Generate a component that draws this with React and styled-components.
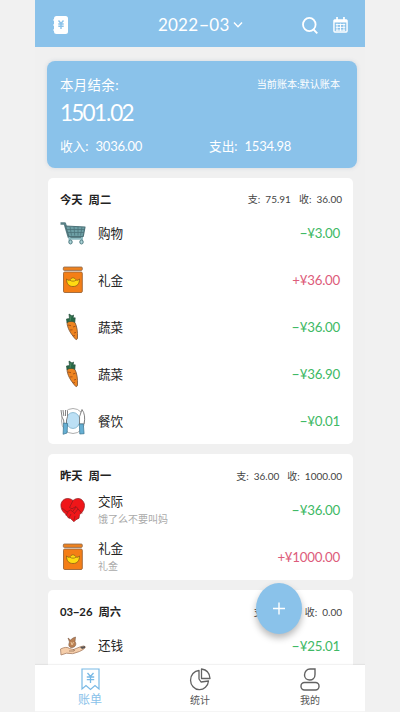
import React from "react";
import styled, { createGlobalStyle } from "styled-components";

const Global = createGlobalStyle`
  * { box-sizing: border-box; }
  body { margin: 0; background: #f1f1f1; font-family: Lato, "Noto Sans CJK SC", sans-serif; color: #333; }
  svg { display: block; overflow: visible; }
`;

const Phone = styled.div`
  position: relative;
  display: flex;
  flex-direction: column;
  width: 330px;
  height: 712px;
  margin: 0 auto;
  overflow: hidden;
  background: #f0f0f0;
`;
const Header = styled.header`
  flex: none;
  display: grid;
  grid-template-columns: 105px 1fr 84px;
  align-items: center;
  height: 47px;
  padding: 3px 15px 0 18px;
  background: #8ac2ea;
  color: #fff;
`;
const Month = styled.div`
  display: flex;
  align-items: center;
  gap: 4px;
  font-size: 17px;
  line-height: 20px;
  letter-spacing: 0.2px;
  white-space: nowrap;
`;
const Tools = styled.div`
  display: flex;
  align-items: center;
  justify-content: flex-end;
  gap: 15px;
  padding-right: 2.5px;
`;
const Dash = styled.span`
  display: inline-block;
  margin: 0 ${(p) => p.$gap || 1.8}px;
  transform: scaleX(1.75);
`;
const Scroll = styled.main`
  flex: 1;
  min-height: 0;
  overflow: hidden;
  padding: 14px 8px 0 13px;
`;
const Summary = styled.section`
  width: 310px;
  height: 107px;
  margin-left: -1px;
  padding: 12px 17px 0 13px;
  border-radius: 8px;
  background: #8ac2ea;
  box-shadow: 0 0 4px rgba(80, 110, 150, 0.18);
  color: #fff;
`;
const SummaryTop = styled.div`
  display: flex;
  justify-content: space-between;
  align-items: center;
  height: 21px;
`;
const SummaryLabel = styled.span`
  font-size: 13.4px;
  letter-spacing: 0.4px;
`;
const Book = styled.span`
  font-size: 10.1px;
`;
const Balance = styled.div`
  height: 37px;
  font-size: 22.5px;
  line-height: 37px;
  letter-spacing: -1.75px;
`;
const Point = styled.span`
  margin: 0 0.7px;
`;
const Totals = styled.div`
  display: grid;
  grid-template-columns: 149px 1fr;
  margin-top: 4px;
  font-size: 12.7px;
  line-height: 22px;
`;
const Total = styled.div`
  display: flex;
  align-items: baseline;
  gap: 7px;
`;
const Num = styled.span`
  font-size: 13px;
  letter-spacing: -0.25px;
`;
const Card = styled.section`
  width: 305px;
  margin-top: 10px;
  border-radius: 5px;
  background: #fff;
`;
const CardHead = styled.div`
  display: flex;
  justify-content: space-between;
  align-items: center;
  height: ${(p) => p.$h || 32}px;
  padding: 10px 11px 0 12px;
`;
const Day = styled.div`
  display: flex;
  align-items: baseline;
  gap: 6px;
  font-size: 11.3px;
  font-weight: 700;
  color: #222;
`;
const DayTotals = styled.div`
  display: flex;
  gap: 8px;
  font-size: 10px;
  color: #444;
`;
const DayTotal = styled.span`
  display: flex;
  align-items: baseline;
  gap: 5px;
`;
const Row = styled.div`
  display: grid;
  grid-template-columns: 38px 1fr auto;
  align-items: center;
  height: 47px;
  padding: ${(p) => p.$drop || 0}px 13px 0 12px;
`;
const Name = styled.div`
  font-size: 12.6px;
  line-height: 19px;
  color: #222;
`;
const Note = styled.div`
  font-size: 10px;
  line-height: 16px;
  color: #aaa;
`;
const Amount = styled.div`
  font-size: 13.3px;
  letter-spacing: -0.25px;
  color: ${(p) => (p.$income ? "#dd5c7b" : "#40b965")};
`;
const TabBar = styled.nav`
  flex: none;
  display: grid;
  grid-template-columns: repeat(3, 1fr);
  height: 47px;
  background: #fff;
  border-bottom: 1px solid #f5f5f5;
  box-shadow: 0 -1px 1px rgba(0, 0, 0, 0.05);
`;
const Tab = styled.div`
  display: flex;
  flex-direction: column;
  align-items: center;
  padding-top: 2px;
  font-size: ${(p) => (p.$active ? 12 : 10)}px;
  line-height: ${(p) => (p.$active ? 16 : 17)}px;
  color: ${(p) => (p.$active ? "#8ac2ea" : "#555")};
`;
const TabIcon = styled.div`
  display: flex;
  align-items: center;
  height: 25px;
`;
const Fab = styled.button`
  position: absolute;
  left: 221px;
  top: 583px;
  width: 46px;
  height: 51px;
  padding: 0;
  border: 0;
  border-radius: 50%;
  display: flex;
  align-items: center;
  justify-content: center;
  background: #8ac2ea;
  box-shadow: 0 4px 7px rgba(0, 0, 0, 0.28);
`;

const BookIcon = () => (
  <svg width="15" height="18" viewBox="0 0 15 18">
    <rect x="1" width="14" height="18" rx="2.5" fill="#fff" />
    <path d="M0 4h2M0 9h2M0 14h2" stroke="#fff" strokeWidth="1.2" />
    <path d="M5.500 4.500l2.500 3 2.500-3M5.300 8h5.400M5.300 10.300h5.400M8 7.500V13" fill="none" stroke="#8ac2ea" strokeWidth="1.4" />
  </svg>
);
const ChevronIcon = () => (
  <svg width="10" height="7" viewBox="0 0 10 7" fill="none" stroke="#fff" strokeWidth="1.4">
    <path d="M1 .5l4 4.300L9 .5" />
  </svg>
);
const SearchIcon = () => (
  <svg width="16" height="17" viewBox="0 0 16 17" fill="none" stroke="#fff" strokeWidth="1.8">
    <ellipse cx="7.3" cy="7.5" rx="6.3" ry="6.7" />
    <path d="M11.500 12.500l3.800 3.800" />
  </svg>
);
const CalendarIcon = () => (
  <svg width="15" height="16" viewBox="0 0 16 17" fill="none" stroke="#fff">
    <rect x="1" y="3" width="14" height="13" rx="1" strokeWidth="1.5" />
    <path d="M1 4.400h14" strokeWidth="2.8" />
    <path d="M4.300 0v4M11.700 0v4" strokeWidth="1.8" />
    <path d="M3 8h10M3 11h10M3 14h10M4.300 7v8M8 7v8M11.700 7v8" strokeWidth="1" />
  </svg>
);
const CartIcon = () => (
  <svg width="26" height="24" viewBox="0 0 26 24" fill="none" strokeLinejoin="round">
    <path d="M.5 2.500h4.300l4 13.500h14" stroke="#5b8187" strokeWidth="2.6" />
    <path d="M5.500 5L25 6l-1.800 9.500H8.800z" fill="#6d9fa5" stroke="#4d7278" strokeWidth="1.2" />
    <path d="M7 8.500h17M8 11.500h16M10 5.500l1.500 9M14 5.500l.7 9M18 5.500v9M22 6l-1.500 8.500" stroke="#4b747a" strokeWidth=".8" />
    <path d="M9.500 16v4M22 16v4M8.500 17.800h14" stroke="#8cbac0" strokeWidth="1.8" />
    <ellipse cx="10.500" cy="21" rx="1.700" ry="2" fill="#acd3d7" stroke="#507b81" />
    <ellipse cx="21.500" cy="21" rx="1.700" ry="2" fill="#acd3d7" stroke="#507b81" />
  </svg>
);
const GiftIcon = () => (
  <svg width="26" height="28" viewBox="0 0 26 28">
    <rect x="3.3" y="1" width="19" height="3.4" rx="1" fill="#ef821e" stroke="#87664d" strokeWidth=".8" />
    <rect x="3.5" y="6" width="18.8" height="20.5" rx="1.3" fill="#f47e16" stroke="#9b6539" strokeWidth=".9" />
    <path d="M6.500 13c2 1.700 3 1.600 4 .3 1.400-2 3.500-2 5 0 1 1.300 2 1.400 4-.3 0 5-2.400 7.500-6.500 7.500S6.500 18 6.500 13z" fill="#ffda12" stroke="#8a5b18" strokeWidth=".8" />
    <path d="M10 14.200c1.500 1.300 4.500 1.300 6 0" fill="none" stroke="#8a5b18" strokeWidth=".7" />
  </svg>
);
const CarrotIcon = () => (
  <svg width="26" height="28" viewBox="0 0 26 28">
    <path d="M7 9c2.500-2 6-1.700 8 .6 2 3.800 2.800 9 2.500 15.400-.4 2-1.700 2-2.600.5C11 21 7 15 7 9z" fill="#ee8420" stroke="#775134" strokeWidth=".8" />
    <path d="M8 12l3 .7M13 14l2.500-.8M10 17l2.500-.2M14 20l2-.6M13 23l2-.5" stroke="#984916" strokeWidth=".8" />
    <path d="M7 9.500L6.500 6l3-.4L9 1l3 2 1.500-1-.3 3 2-.2-.4 4.500c-2.500-1.300-5-1.300-7.800.2z" fill="#276947" stroke="#28513d" strokeWidth=".7" />
    <path d="M10 8l1-5" stroke="#5a9369" strokeWidth=".7" />
  </svg>
);
const MealIcon = () => (
  <svg width="26" height="28" viewBox="0 0 26 28">
    <ellipse cx="13" cy="14" rx="11.500" ry="12.500" fill="#fff" stroke="#999" strokeWidth=".8" />
    <ellipse cx="13" cy="13.500" rx="6.800" ry="8" fill="#bce0f5" stroke="#80b2cb" strokeWidth=".8" />
    <path d="M1 3l1 7q1 2 1.600 3L4 17h2.500V13Q8 11 7.500 3.500M3 3l.8 6M5.500 3v6" fill="#fff" stroke="#656565" strokeWidth=".8" />
    <path d="M22 2.500q-3.600 7-2.500 14.500H24Q26 8 22 2.500z" fill="#fff" stroke="#656565" strokeWidth=".8" />
    <path d="M3.600 16l4 .5-.5 9.500-4 1.300zM19.300 17h4l.8 9.700-4.300.3z" fill="#65afd3" stroke="#39728e" strokeWidth=".7" />
  </svg>
);
const HeartIcon = () => (
  <svg width="26" height="28" viewBox="0 0 26 28">
    <path d="M13 4.500C9 1 2.500 2 1 8c-.5 5 2 8 4.500 10l3 4 2 .5 3.500 3.200 2-2 3-1.500.5-3.500c3-2 5.700-6.500 4.800-11C22.500 2 17 1 13 4.500z" fill="#f01619" stroke="#8b1d20" strokeWidth=".7" />
    <path d="M13 4.500l-3.500 7 2.500 1.300 4-2.300 6 7M2 12l5 4 3.500-2 4 3M16 11l-3 4M18 13l-4 5M8 16l-2 3.500M11 18l-2 4M15 20l-1 4" fill="none" stroke="#8b1a1c" strokeWidth=".7" />
  </svg>
);
const HandIcon = () => (
  <svg width="26" height="22" viewBox="0 0 26 22">
    <path d="M.5 14q6-3 9-.5l4 1 7-2.800q4-1.600 5 .2-1 2.500-6 4.600-7 3.500-13 1.700L1 20z" fill="#f5cda9" stroke="#a77f65" strokeWidth=".8" />
    <path d="M9 16h5q1.500-1-1-1.700" fill="none" stroke="#987158" strokeWidth=".8" />
    <path d="M20 12l5-1v2l-3 1" fill="#5a5656" />
    <path d="M8 3l2.500 2L13 3l2.500-1-.5 4.500c2 3 0 6-3 6s-4-2-2.500-5.500z" fill="#ba8154" stroke="#7e5b45" strokeWidth=".6" />
    <path d="M11 7l1 3 1.500-3" stroke="#eac399" fill="none" />
  </svg>
);
const BillIcon = () => (
  <svg width="19" height="23" viewBox="0 0 19 23" fill="none" stroke="#79b9e5" strokeWidth="1.200">
    <path d="M1 1h17v20l-4-3.500-4.500 4-4.500-4L1 21z" />
    <path d="M6.500 5l3 3.500 3-3.500M5.800 9h7.400M5.800 11.700h7.400M9.500 8.500v6.500" strokeWidth="1.300" />
  </svg>
);
const PieIcon = () => (
  <svg width="21" height="23" viewBox="0 0 21 23" fill="none" stroke="#626262" strokeWidth="1.300" strokeLinejoin="round">
    <path d="M9 2.500A9 9.600 0 1 0 18.500 13L11 14 9 11z" />
    <path d="M11.500 1v9.500H20Q19.500 2 11.500 1z" />
  </svg>
);
const PersonIcon = () => (
  <svg width="20" height="23" viewBox="0 0 20 23" fill="none" stroke="#626262" strokeWidth="1.400">
    <path d="M10 1h5v5.500c0 7.500-10.500 7-10.500.5C4.500 3.500 7 1 10 1z" />
    <rect x="1" y="14.500" width="18" height="7.500" rx="3.500" />
  </svg>
);
const PlusIcon = () => (
  <svg width="12" height="14" viewBox="0 0 12 14" stroke="#fff" strokeWidth="1.400">
    <path d="M6 .5v12M0 6.500h12" />
  </svg>
);

const days = [
  {
    labels: ["今天", "周二"], out: "75.91", inc: "36.00", h: 31, drop: 1.5,
    rows: [
      [CartIcon, "购物", "-¥3.00"],
      [GiftIcon, "礼金", "+¥36.00"],
      [CarrotIcon, "蔬菜", "-¥36.00"],
      [CarrotIcon, "蔬菜", "-¥36.90"],
      [MealIcon, "餐饮", "-¥0.01"],
    ],
  },
  {
    labels: ["昨天", "周一"], out: "36.00", inc: "1000.00",
    rows: [
      [HeartIcon, "交际", "-¥36.00", "饿了么不要叫妈"],
      [GiftIcon, "礼金", "+¥1000.00", "礼金"],
    ],
  },
  { labels: ["03-26", "周六"], out: "25.01", inc: "0.00", rows: [[HandIcon, "还钱", "-¥25.01"]] },
];

const Dashed = ({ text, gap }) =>
  text.split(/(-)/).map((part, i) => (part === "-" ? <Dash key={i} $gap={gap}>-</Dash> : part));

export default function App() {
  return (
    <>
      <Global />
      <Phone>
        <Header>
          <BookIcon />
          <Month>
            <span><Dashed text="2022-03" gap={2.3} /></span>
            <ChevronIcon />
          </Month>
          <Tools>
            <SearchIcon />
            <CalendarIcon />
          </Tools>
        </Header>
        <Scroll>
          <Summary>
            <SummaryTop>
              <SummaryLabel>本月结余:</SummaryLabel>
              <Book>当前账本:默认账本</Book>
            </SummaryTop>
            <Balance>1501<Point>.</Point>02</Balance>
            <Totals>
              <Total><span>收入:</span><Num>3036.00</Num></Total>
              <Total><span>支出:</span><Num>1534.98</Num></Total>
            </Totals>
          </Summary>
          {days.map((day) => (
            <Card key={day.labels[0]}>
              <CardHead $h={day.h}>
                <Day>
                  <span><Dashed text={day.labels[0]} gap={1} /></span>
                  <span>{day.labels[1]}</span>
                </Day>
                <DayTotals>
                  <DayTotal><span>支:</span><span>{day.out}</span></DayTotal>
                  <DayTotal><span>收:</span><span>{day.inc}</span></DayTotal>
                </DayTotals>
              </CardHead>
              {day.rows.map(([Icon, name, amount, note], i) => (
                <Row key={i} $drop={day.drop}>
                  <Icon />
                  <div>
                    <Name>{name}</Name>
                    {note && <Note>{note}</Note>}
                  </div>
                  <Amount $income={amount[0] === "+"}><Dashed text={amount} /></Amount>
                </Row>
              ))}
            </Card>
          ))}
        </Scroll>
        <TabBar>
          <Tab $active><TabIcon><BillIcon /></TabIcon>账单</Tab>
          <Tab><TabIcon><PieIcon /></TabIcon>统计</Tab>
          <Tab><TabIcon><PersonIcon /></TabIcon>我的</Tab>
        </TabBar>
        <Fab aria-label="add"><PlusIcon /></Fab>
      </Phone>
    </>
  );
}
